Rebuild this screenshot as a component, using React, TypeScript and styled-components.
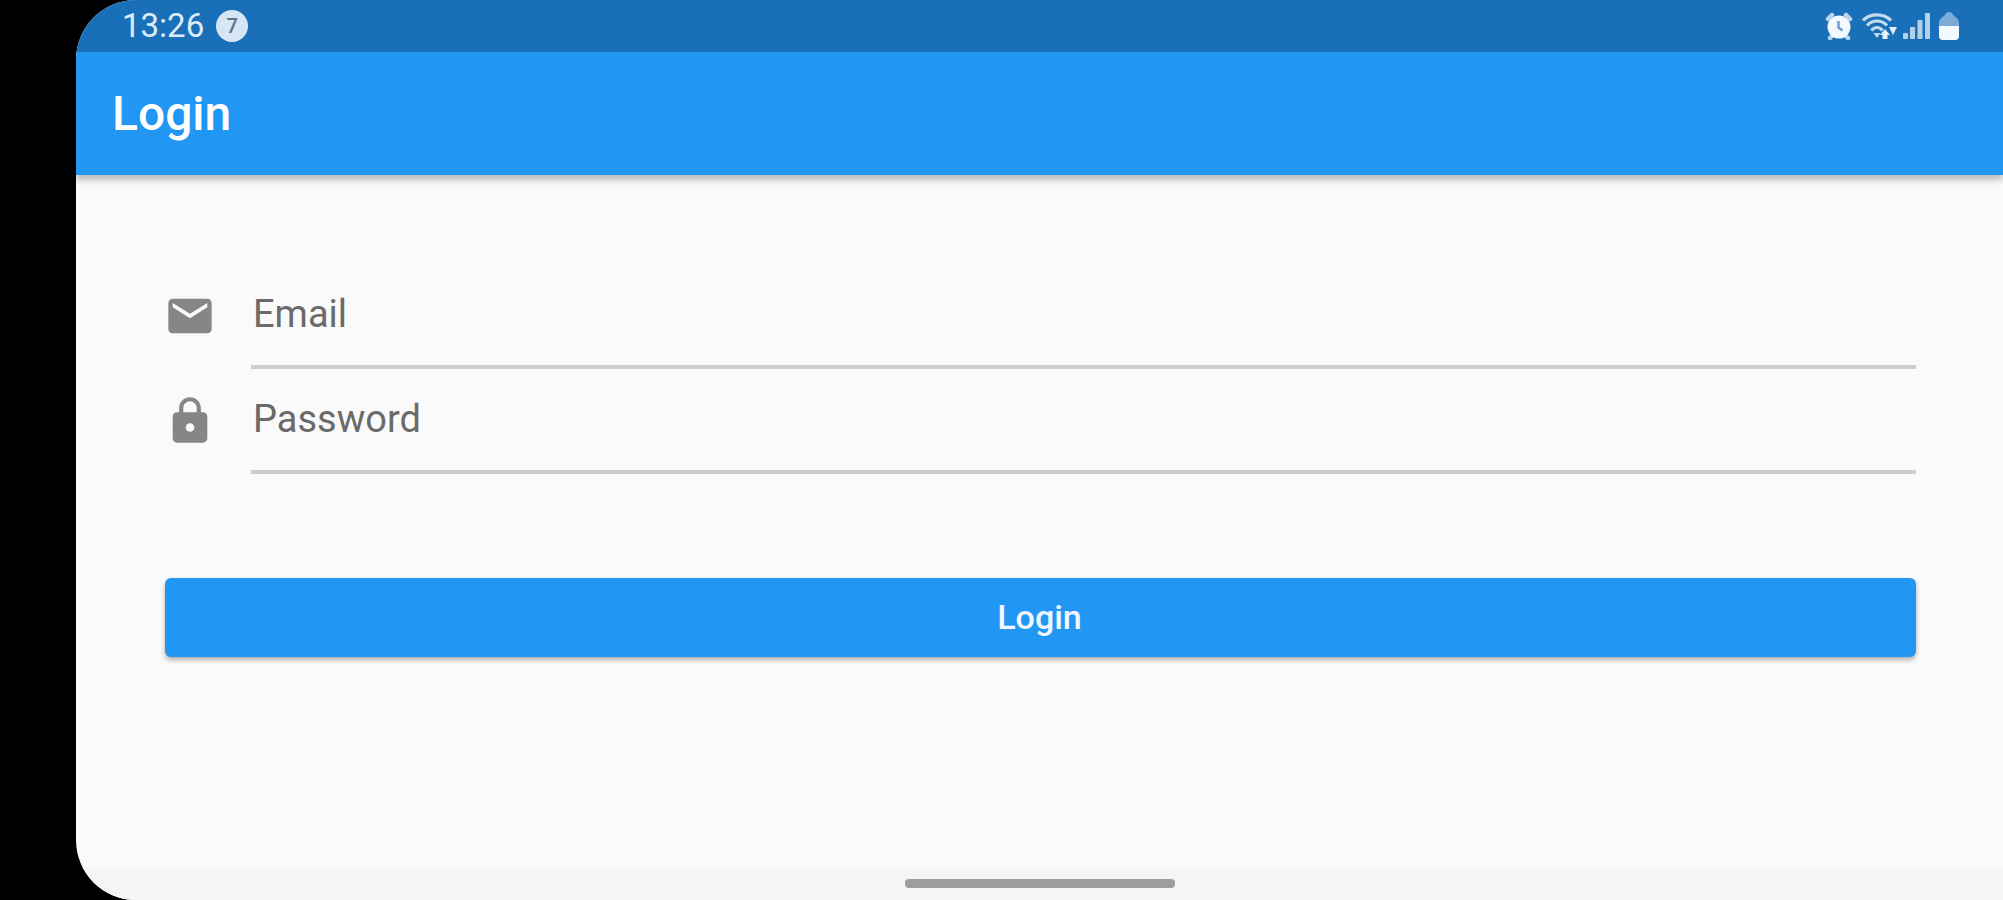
import React from "react";
import styled, { createGlobalStyle } from "styled-components";

const GlobalStyle = createGlobalStyle`
  *, *::before, *::after { box-sizing: border-box; }
  body {
    margin: 0;
    background: #000;
    font-family: Roboto, "Liberation Sans", sans-serif;
  }
`;

const Device = styled.div`
  display: flex;
  min-height: 100vh;
  padding-left: 76px;
  background: #000;
`;

const Screen = styled.div`
  flex: 1;
  display: flex;
  flex-direction: column;
  overflow: hidden;
  border-radius: 60px 0 0 60px;
  background: #fafafa;
`;

const StatusBar = styled.div`
  display: flex;
  align-items: center;
  justify-content: space-between;
  height: 52px;
  padding: 0 44px 0 46px;
  background: #1a70b8;
  color: #dcebf8;
`;

const StatusGroup = styled.div<{ $gap: number }>`
  display: flex;
  align-items: center;
  gap: ${(p) => p.$gap}px;
`;

const Clock = styled.time`
  font-size: 33px;
  line-height: 40px;
`;

const NotificationCount = styled.span`
  display: grid;
  place-items: center;
  width: 32px;
  height: 32px;
  border-radius: 50%;
  background: #d6e6f5;
  color: #5d7386;
  font-size: 20px;
  font-weight: 500;
  line-height: 32px;
`;

const AppBar = styled.header`
  display: flex;
  align-items: center;
  height: 123px;
  padding: 0 36px;
  background: #2196f3;
  box-shadow: 0 5px 6px rgba(0, 0, 0, 0.25);
`;

const Title = styled.h1`
  margin: 0;
  color: #fff;
  font-size: 48px;
  font-weight: 500;
  line-height: 56px;
`;

const LoginForm = styled.form`
  flex: 1;
  display: flex;
  flex-direction: column;
  padding: 89px 87px 0 88px;
`;

const FieldRow = styled.div`
  display: flex;
  align-items: center;
  gap: 35px;
  height: 105px;
`;

const FieldIcon = styled.svg`
  flex: none;
  width: 52px;
  height: 52px;
  margin-bottom: 2px;
  fill: #868686;
`;

const FieldBox = styled.div`
  flex: 1;
  display: grid;
  align-items: center;
  height: 100%;
  border-bottom: 4px solid #cdcdcd;

  &:focus-within {
    border-color: #2196f3;
  }

  > * {
    grid-area: 1 / 1;
  }
`;

const FieldInput = styled.input`
  width: 100%;
  height: 100%;
  padding: 24px 0 0 2px;
  border: 0;
  outline: 0;
  background: transparent;
  color: #212121;
  font: inherit;
  font-size: 36px;
`;

const FieldLabel = styled.label`
  padding: 0 0 2px 2px;
  color: #6a6a6a;
  font-size: 38px;
  line-height: 44px;
  pointer-events: none;

  ${FieldInput}:focus + &,
  ${FieldInput}:not(:placeholder-shown) + & {
    align-self: start;
    font-size: 24px;
    line-height: 28px;
  }
`;

const SubmitButton = styled.button`
  height: 79px;
  margin: 104px 0 0 1px;
  padding: 0 2px 2px 0;
  border: 0;
  border-radius: 6px;
  background: #2196f3;
  box-shadow: 0 3px 5px rgba(0, 0, 0, 0.3);
  color: #f0f7fe;
  font: inherit;
  font-size: 34px;
  font-weight: 500;
  line-height: 40px;
  cursor: pointer;
`;

const NavigationBar = styled.footer`
  display: flex;
  align-items: center;
  justify-content: center;
  height: 33px;
  background: #f5f5f5;
`;

const HomeHandle = styled.span`
  width: 270px;
  height: 9px;
  border-radius: 4px;
  background: #9e9e9e;
`;

const AlarmIcon = () => (
  <svg width="28" height="28" viewBox="0 0 28 28" aria-hidden="true">
    <path d="M3 7l4-4M25 7l-4-4M5 26l4-4M23 26l-4-4" stroke="#b9d5ee" strokeWidth="4.500" strokeLinecap="round" />
    <circle cx="14" cy="15" r="11.500" fill="#f2f8fd" />
    <path d="M13.500 9v6.500l4 3" fill="none" stroke="#6f9fd0" strokeWidth="2.500" />
  </svg>
);

const WifiIcon = () => (
  <svg width="35" height="30" viewBox="0 0 35 30" aria-hidden="true">
    <g fill="none" stroke="#c5dcf0" strokeWidth="3.200">
      <path d="M1 9.500C8 2 22 2 29 9.500" />
      <path d="M5 14.500c5.500-6 14.500-6 20 0" />
      <path d="M9.500 19.500c3-4 8-4 11 0" />
    </g>
    <path d="M11.500 22h7L15 27z" fill="#c5dcf0" />
    <path d="M23 18l5 6h-2.500v4h-5v-4H18z" fill="#e6f1fa" />
    <path d="M27 16h8l-4 8z" fill="#e6f1fa" />
  </svg>
);

const SignalIcon = () => (
  <svg width="27" height="28" viewBox="0 0 27 28" fill="#b4d1ea" aria-hidden="true">
    <rect x="0" y="21" width="5" height="6" rx="1" />
    <rect x="7" y="15" width="5" height="12" rx="1" />
    <rect x="14.500" y="8" width="5" height="19" rx="1" />
    <rect x="22" y="1" width="5" height="26" rx="1" />
  </svg>
);

const BatteryIcon = () => (
  <svg width="20" height="28" viewBox="0 0 20 28" aria-hidden="true">
    <path d="M7 1q3-2 6 0l2 3q5 3 5 7v4H0v-4q0-4 5-7z" fill="#7cabd9" />
    <path d="M0 14h20v10q0 4-4 4H4q-4 0-4-4z" fill="#f5fafe" />
  </svg>
);

const MAIL =
  "M20 4H4c-1.100 0-1.990.9-1.990 2L2 18c0 1.100.9 2 2 2h16c1.100 0 2-.9 2-2V6c0-1.100-.9-2-2-2zm0 4l-8 5-8-5V6l8 5 8-5v2z";
const LOCK =
  "M18 8h-1V6c0-2.760-2.240-5-5-5S7 3.240 7 6v2H6c-1.100 0-2 .9-2 2v10c0 1.100.9 2 2 2h12c1.100 0 2-.9 2-2V10c0-1.100-.9-2-2-2zm-6 9c-1.100 0-2-.9-2-2s.9-2 2-2 2 .9 2 2-.9 2-2 2zm3.100-9H8.900V6c0-1.710 1.390-3.100 3.100-3.100 1.710 0 3.100 1.390 3.100 3.100v2z";

type FieldProps = { id: string; label: string; type: string; icon: string };

const Field = ({ id, label, type, icon }: FieldProps) => (
  <FieldRow>
    <FieldIcon viewBox="0 0 24 24" aria-hidden="true">
      <path d={icon} />
    </FieldIcon>
    <FieldBox>
      <FieldInput id={id} name={id} type={type} placeholder=" " />
      <FieldLabel htmlFor={id}>{label}</FieldLabel>
    </FieldBox>
  </FieldRow>
);

export default function App() {
  return (
    <>
      <GlobalStyle />
      <Device>
        <Screen>
          <StatusBar>
            <StatusGroup $gap={12}>
              <Clock>13:26</Clock>
              <NotificationCount>7</NotificationCount>
            </StatusGroup>
            <StatusGroup $gap={9}>
              <AlarmIcon />
              <StatusGroup $gap={6}>
                <WifiIcon />
                <SignalIcon />
              </StatusGroup>
              <BatteryIcon />
            </StatusGroup>
          </StatusBar>
          <AppBar>
            <Title>Login</Title>
          </AppBar>
          <LoginForm onSubmit={(e) => e.preventDefault()}>
            <Field id="email" label="Email" type="email" icon={MAIL} />
            <Field id="password" label="Password" type="password" icon={LOCK} />
            <SubmitButton type="submit">Login</SubmitButton>
          </LoginForm>
          <NavigationBar>
            <HomeHandle />
          </NavigationBar>
        </Screen>
      </Device>
    </>
  );
}
